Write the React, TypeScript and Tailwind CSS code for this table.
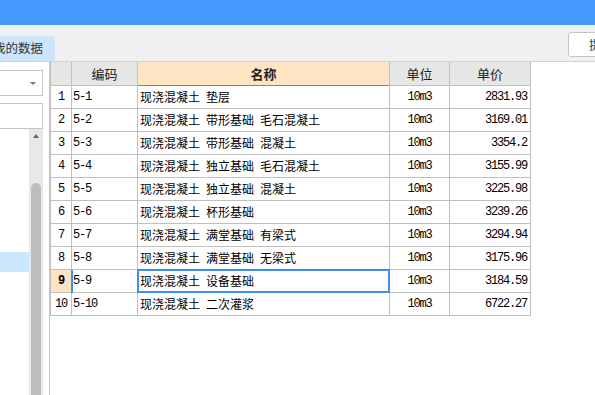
import React from "react";

// 定额列表数据
const rows = [
  { no: 1, code: "5-1", name: ["现浇混凝土", "垫层"], unit: "10m3", price: "2831.93" },
  { no: 2, code: "5-2", name: ["现浇混凝土", "带形基础", "毛石混凝土"], unit: "10m3", price: "3169.01" },
  { no: 3, code: "5-3", name: ["现浇混凝土", "带形基础", "混凝土"], unit: "10m3", price: "3354.2" },
  { no: 4, code: "5-4", name: ["现浇混凝土", "独立基础", "毛石混凝土"], unit: "10m3", price: "3155.99" },
  { no: 5, code: "5-5", name: ["现浇混凝土", "独立基础", "混凝土"], unit: "10m3", price: "3225.98" },
  { no: 6, code: "5-6", name: ["现浇混凝土", "杯形基础"], unit: "10m3", price: "3239.26" },
  { no: 7, code: "5-7", name: ["现浇混凝土", "满堂基础", "有梁式"], unit: "10m3", price: "3294.94" },
  { no: 8, code: "5-8", name: ["现浇混凝土", "满堂基础", "无梁式"], unit: "10m3", price: "3175.96" },
  { no: 9, code: "5-9", name: ["现浇混凝土", "设备基础"], unit: "10m3", price: "3184.59" },
  { no: 10, code: "5-10", name: ["现浇混凝土", "二次灌浆"], unit: "10m3", price: "6722.27" },
];

const SELECTED = 9;
const mono = "font-['Liberation_Mono',monospace] text-[12px] tracking-[-1.2px]";

export default function App() {
  return (
    <div className="w-[595px] h-[395px] overflow-hidden bg-white flex flex-col font-['Noto_Sans_CJK_SC',sans-serif] text-black">
      {/* 顶部蓝条 */}
      <div className="h-[25px] shrink-0 bg-[#4399fd]" />

      {/* 工具栏 */}
      <div className="h-[37px] shrink-0 bg-[#f0f0f0] border-b border-[#d2d2d2] flex items-end overflow-hidden">
        <div className="w-[55px] h-[25px] bg-[#cce5fc] rounded-tr-[4px] flex items-center overflow-hidden">
          <span className="-ml-[7px] whitespace-nowrap text-[12.5px] text-[#333] leading-none">我的数据</span>
        </div>
        <div className="ml-auto mb-[4px] -mr-[33px] w-[60px] h-[25px] bg-white border border-[#c6c6c6] rounded-[3px] flex items-center pl-[20px] shrink-0">
          <span className="text-[12px] text-[#333] whitespace-nowrap">提交</span>
        </div>
      </div>

      <div className="flex-1 flex min-h-0">
        {/* 左侧面板 */}
        <div className="w-[50px] shrink-0 border-r border-[#c8c8c8] flex flex-col overflow-hidden">
          <div className="mt-[8px] -ml-[3px] w-[46px] h-[26px] shrink-0 border border-[#c6c6c6] bg-white flex items-center justify-end pr-[6px]">
            <div className="w-0 h-0 border-l-[3px] border-r-[3px] border-t-[3px] border-l-transparent border-r-transparent border-t-[#777]" />
          </div>
          <div className="mt-[7px] -ml-[3px] w-[46px] h-[26px] shrink-0 border border-[#c6c6c6] bg-white" />
          <div className="flex-1 flex min-h-0">
            <div className="w-[29px] flex flex-col">
              <div className="mt-[123px] h-[20px] bg-[#cce8ff]" />
            </div>
            <div className="w-[14px] bg-[#e8e8e8] flex flex-col items-center">
              <div className="mt-[5px] w-0 h-0 border-l-[3px] border-r-[3px] border-b-[4px] border-l-transparent border-r-transparent border-b-[#666]" />
              <div className="mt-[45px] w-[10px] flex-1 bg-[#bdbdbd] rounded-t-[5px]" />
            </div>
          </div>
        </div>

        {/* 表格 */}
        <div className="flex flex-col">
          <div className="flex h-[24px] border-l border-b border-[#c0c0c0] text-[13px] text-[#222]">
            <div className="w-[21px] border-r border-[#c0c0c0] bg-[#e6e6e6]" />
            <div className="w-[66px] border-r border-[#c0c0c0] bg-[#e6e6e6] flex items-center justify-center">编码</div>
            <div className="relative w-[252px] border-r border-[#c0c0c0] bg-[#ffe4c4] flex items-center justify-center font-bold">
              名称
              <div className="absolute left-0 right-0 -bottom-[1px] h-[1px] bg-[#3f8ff2]" />
            </div>
            <div className="w-[60px] border-r border-[#c0c0c0] bg-[#e6e6e6] flex items-center justify-center">单位</div>
            <div className="w-[81px] border-r border-[#c0c0c0] bg-[#e6e6e6] flex items-center justify-center">单价</div>
          </div>

          {rows.map((r) => {
            const sel = r.no === SELECTED;
            return (
              <div key={r.no} className="flex h-[23px] border-l border-b border-[#c0c0c0] text-[12px]">
                <div
                  className={`w-[21px] border-r border-[#c0c0c0] flex items-center justify-center ${mono} ${
                    sel ? "bg-[#ffe4c4] font-bold" : ""
                  }`}
                >
                  {r.no}
                </div>
                <div className={`relative w-[66px] border-r border-[#c0c0c0] flex items-center pl-[1px] ${mono}`}>
                  {r.code}
                  {sel && <div className="absolute -left-[1px] top-0 -bottom-[1px] w-[2px] bg-[#3f8ff2]" />}
                </div>
                <div className="relative w-[252px] border-r border-[#c0c0c0] flex items-center pl-[2px] whitespace-nowrap">
                  {r.name.join("\u2002")}
                  {sel && <div className="absolute -left-[1px] -right-[1px] -top-[1px] -bottom-[1px] border-2 border-[#3f8ff2]" />}
                </div>
                <div className={`w-[60px] border-r border-[#c0c0c0] flex items-center justify-center ${mono}`}>{r.unit}</div>
                <div className={`w-[81px] border-r border-[#c0c0c0] flex items-center justify-end pr-[3px] ${mono}`}>{r.price}</div>
              </div>
            );
          })}
        </div>
      </div>
    </div>
  );
}
